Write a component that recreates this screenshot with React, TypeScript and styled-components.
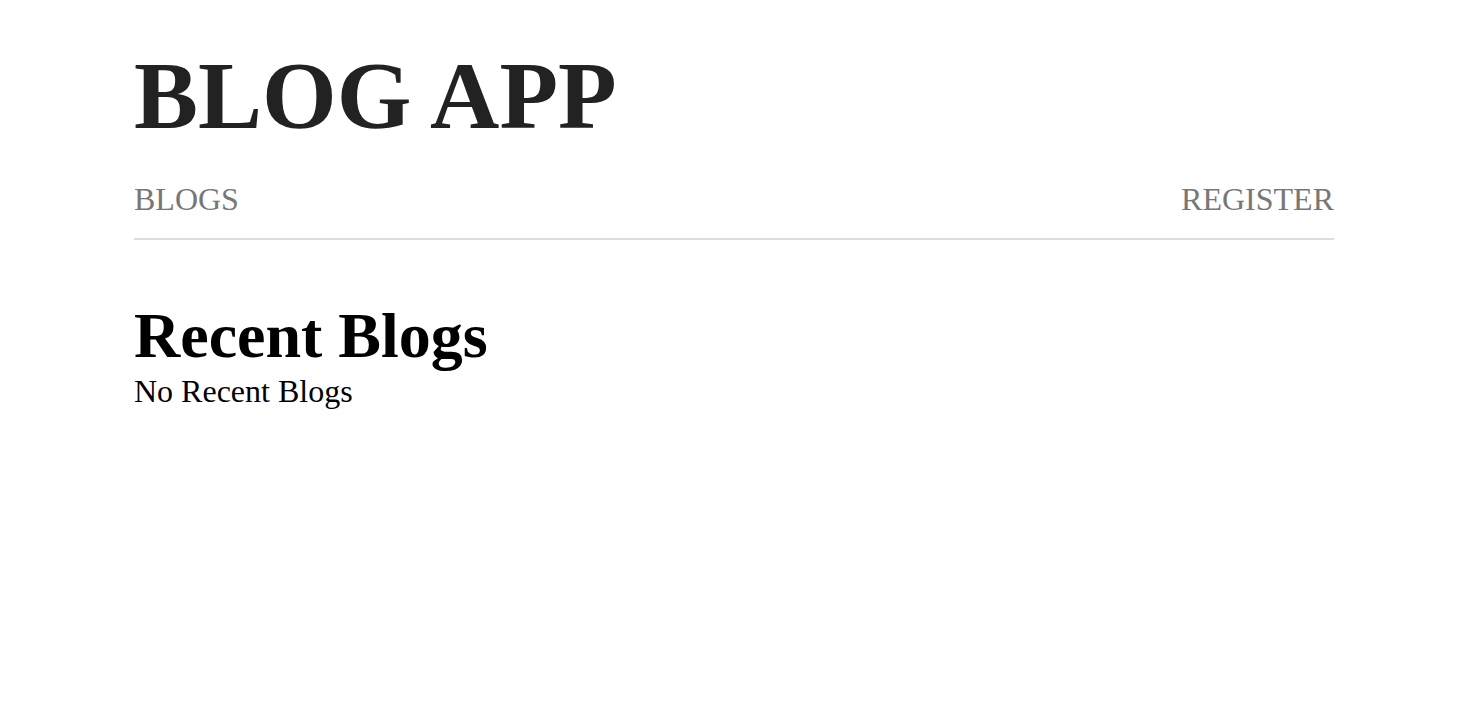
import React from "react";
import styled, { createGlobalStyle } from "styled-components";

const GlobalStyle = createGlobalStyle`
  html, body {
    margin: 0;
    padding: 0;
    background: #ffffff;
    font-family: "Liberation Serif", "Times New Roman", serif;
  }
`;

const Page = styled.div`
  width: 1200px;
  margin: 0 auto;
  padding-top: 40px;
`;

const Header = styled.header`
  display: flex;
  flex-direction: column;
`;

const Title = styled.h1`
  margin: 0;
  font-size: 96px;
  line-height: normal;
  font-weight: 700;
  color: #222222;
`;

const Nav = styled.nav`
  display: flex;
  justify-content: space-between;
  align-items: center;
  margin-top: 30px;
  padding-bottom: 20px;
  border-bottom: 2px solid #dddddd;
`;

const NavLink = styled.a`
  font-size: 32px;
  line-height: normal;
  color: #777777;
  text-decoration: none;
  cursor: pointer;
`;

const Main = styled.main`
  padding-top: 59px;
`;

const SectionTitle = styled.h2`
  margin: 0;
  font-size: 64px;
  line-height: normal;
  font-weight: 700;
  color: #000000;
`;

const Empty = styled.p`
  margin: 0;
  font-size: 32px;
  line-height: normal;
  color: #000000;
`;

export default function App() {
  return (
    <>
      <GlobalStyle />
      <Page>
        <Header>
          <Title>BLOG APP</Title>
          <Nav>
            <NavLink>BLOGS</NavLink>
            <NavLink>REGISTER</NavLink>
          </Nav>
        </Header>
        <Main>
          <SectionTitle>Recent Blogs</SectionTitle>
          <Empty>No Recent Blogs</Empty>
        </Main>
      </Page>
    </>
  );
}
